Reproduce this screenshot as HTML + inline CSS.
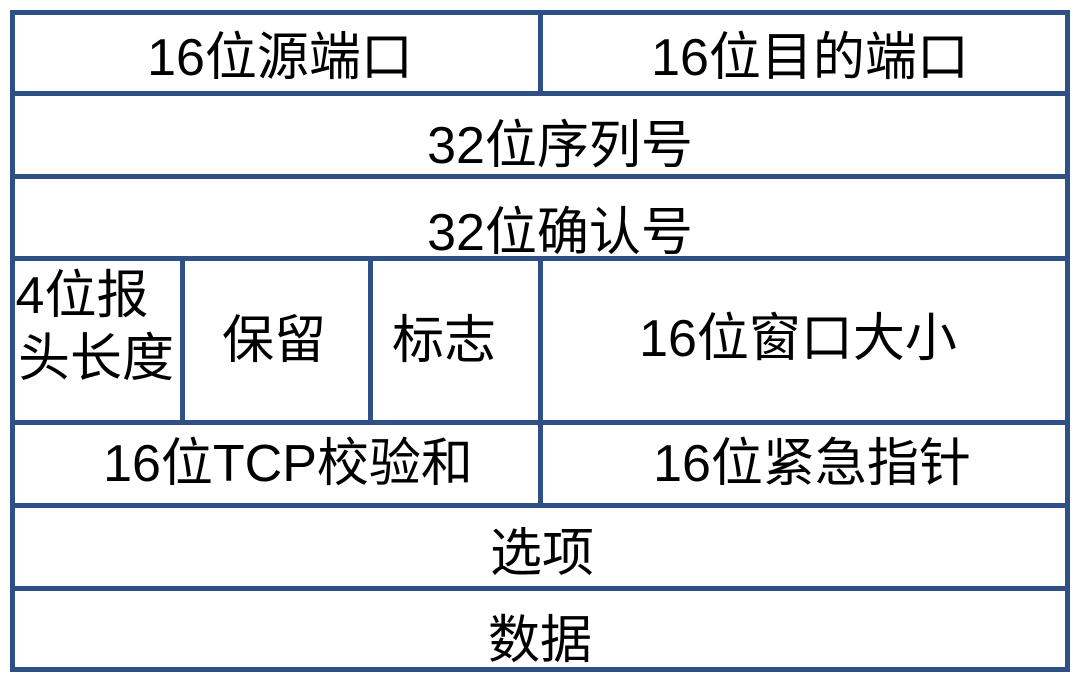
<!DOCTYPE html>
<html><head><meta charset="utf-8"><style>
body{margin:0;width:1078px;height:682px;background:#fff;position:relative;overflow:hidden;font-family:"Liberation Sans","Noto Sans CJK SC",sans-serif;}
.h,.v{position:absolute;background:#2f4f87;}
.h{height:5px;left:10px;width:1060px}
.v{width:5px}
.t{position:absolute;font-size:52px;line-height:56px;color:#000;white-space:nowrap;transform:translate(-50%,-50%);}
</style></head><body>
<div class="h" style="top:10px"></div>
<div class="h" style="top:91px"></div>
<div class="h" style="top:174px"></div>
<div class="h" style="top:256px"></div>
<div class="h" style="top:420px"></div>
<div class="h" style="top:503px"></div>
<div class="h" style="top:586px"></div>
<div class="h" style="top:667px"></div>
<div class="v" style="left:10px;top:10px;height:662px"></div>
<div class="v" style="left:1065px;top:10px;height:662px"></div>
<div class="v" style="left:538px;top:10px;height:86px"></div>
<div class="v" style="left:180px;top:256px;height:169px"></div>
<div class="v" style="left:368px;top:256px;height:169px"></div>
<div class="v" style="left:538px;top:256px;height:252px"></div>
<div class="t" style="left:280px;top:58px">16位源端口</div>
<div class="t" style="left:810px;top:58px">16位目的端口</div>
<div class="t" style="left:560px;top:146px">32位序列号</div>
<div class="t" style="left:560px;top:233px">32位确认号</div>
<div class="t" style="left:82px;top:296px">4位报</div>
<div class="t" style="left:96px;top:359px">头长度</div>
<div class="t" style="left:274px;top:341px">保留</div>
<div class="t" style="left:444px;top:341px">标志</div>
<div class="t" style="left:798px;top:339px">16位窗口大小</div>
<div class="t" style="left:288px;top:464px">16位TCP校验和</div>
<div class="t" style="left:812px;top:464px">16位紧急指针</div>
<div class="t" style="left:542px;top:554px">选项</div>
<div class="t" style="left:540px;top:641px">数据</div>
</body></html>
